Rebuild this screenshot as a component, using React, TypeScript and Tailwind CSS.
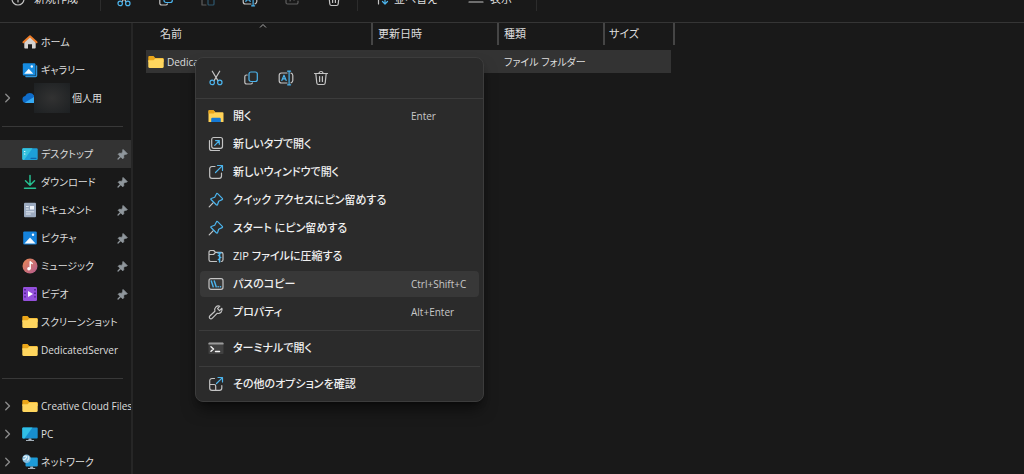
import type { ReactNode } from "react";

const GREY = "#c4c4c4";
const BLUE = "#4cb5ee";

function Svg({ children, className = "size-4" }: { children: ReactNode; className?: string }) {
  return (
    <svg
      viewBox="0 0 16 16"
      fill="none"
      stroke={GREY}
      strokeWidth="1.2"
      strokeLinecap="round"
      strokeLinejoin="round"
      className={`shrink-0 ${className}`}
      aria-hidden="true"
    >
      {children}
    </svg>
  );
}

/* ---- command icons ---- */

const CutIcon = () => (
  <Svg>
    <path d="M4.3 1.2 9.9 10.6M11.7 1.2 6.1 10.6" />
    <circle cx="4.2" cy="12.4" r="2.2" stroke={BLUE} />
    <circle cx="11.8" cy="12.4" r="2.2" stroke={BLUE} />
  </Svg>
);

const CopyIcon = () => (
  <Svg>
    <path d="M4.2 5H3.6A1.8 1.8 0 0 0 1.8 6.8v5.4A1.8 1.8 0 0 0 3.6 14h4.2a1.8 1.8 0 0 0 1.6-1" />
    <rect x="6" y="2" width="8.3" height="9.5" rx="2" stroke={BLUE} />
  </Svg>
);

const PasteIcon = () => (
  <Svg className="size-4 opacity-40">
    <path d="M6 3H2v11h4" />
    <rect x="8" y="4" width="6" height="10" rx="1" stroke={BLUE} />
  </Svg>
);

const RenameIcon = () => (
  <Svg>
    <path d="M9 3H3.5A2.3 2.3 0 0 0 1.2 5.3v5.4A2.3 2.3 0 0 0 3.5 13H9M13 3.2a2.3 2.3 0 0 1 1.8 2.2v5.2A2.3 2.3 0 0 1 13 12.8" />
    <path d="M3.8 10.5 6 5.2l2.2 5.3M4.6 8.9h2.8M9.6 1.2h3M9.6 14.8h3M11.1 1.2v13.6" stroke={BLUE} />
  </Svg>
);

const ShareIcon = () => (
  <Svg className="size-4 opacity-40">
    <path d="M6 3H3.5A1.5 1.5 0 0 0 2 4.5v7A1.5 1.5 0 0 0 3.5 13h9a1.5 1.5 0 0 0 1.5-1.5V10M10 2l4 3.5L10 9M14 5.5C9 5.5 7 7 6 10" />
  </Svg>
);

const TrashIcon = () => (
  <Svg>
    <path d="M1.5 3.5h13M6 3.5a2 2 0 0 1 4 0M2.8 3.5l1 9.5a1.7 1.7 0 0 0 1.7 1.5h5a1.7 1.7 0 0 0 1.7-1.5l1-9.5M6.6 6.5v5M9.4 6.5v5" />
  </Svg>
);

const NewIcon = () => (
  <Svg>
    <circle cx="8" cy="8" r="6" />
    <path d="M8 5v6M5 8h6" />
  </Svg>
);

const SortIcon = () => (
  <Svg>
    <path d="M4.5 13V3M2 5.5 4.5 3 7 5.5" />
    <path d="M11 3v10M8.5 10.5 11 13l2.5-2.5" stroke={BLUE} />
  </Svg>
);

const ViewIcon = () => (
  <Svg>
    <path d="M1 3h14M1 7h14M1 11h14" />
  </Svg>
);

/* ---- context menu icons ---- */

const OpenFolderIcon = () => (
  <Svg>
    <path d="M.5 2.5h5.2l1.5 1.8h7.3a1 1 0 0 1 1 1V14H.5z" fill="#ffd257" stroke="none" />
    <path d="M.5 3.2c0-.8.4-1.2 1.2-1.2h3.6l2 2-1.6 1.6H.5z" fill="#e8a41c" stroke="none" />
    <path d="M3.2 14V11a1.2 1.2 0 0 1 1.2-1.2h7.2a1.2 1.2 0 0 1 1.2 1.2v3z" fill="#1478d4" stroke="none" />
  </Svg>
);

const NewTabIcon = () => (
  <Svg>
    <rect x="3.7" y="1.5" width="10.8" height="10.8" rx="2" />
    <path d="M1.5 4.5v7.7a2.3 2.3 0 0 0 2.3 2.3h7.7" />
    <path d="M6.7 9.3 11 5M7.6 4.6H11.3v3.7" stroke={BLUE} />
  </Svg>
);

const NewWindowIcon = () => (
  <Svg>
    <path d="M7 2.5H4A2.3 2.3 0 0 0 1.7 4.8V12A2.3 2.3 0 0 0 4 14.3h7.2a2.3 2.3 0 0 0 2.3-2.3V9" />
    <path d="M7.5 8.5 14.2 1.8M9.5 1.5h5v5" stroke={BLUE} />
  </Svg>
);

const PinIcon = () => (
  <Svg>
    <path d="M5.3 10.7 1.2 14.8" />
    <path
      d="M9.6 1.7 14.3 6.4c.4.4.3 1-.2 1.2L10.7 9.3 9.5 12.8c-.2.5-.7.6-1 .2L3 7.5c-.4-.3-.2-.9.2-1L6.7 5.3 8.4 1.9c.2-.5.8-.6 1.2-.2z"
      stroke={BLUE}
    />
  </Svg>
);

const ZipIcon = () => (
  <Svg>
    <path d="M8.5 13.5H2.7A1.7 1.7 0 0 1 1 11.8V4.2a1.7 1.7 0 0 1 1.7-1.7h3L7.5 4.3h5.8A1.7 1.7 0 0 1 15 6v5.8a1.7 1.7 0 0 1-1.7 1.7M1 6.5h4.5l2-2.2" />
    <path d="M10 5h3M11.6 5v9M10.4 7.5h1M11.8 9.5h1M10.4 11.5h1" stroke={BLUE} strokeWidth="1.5" />
  </Svg>
);

const CopyPathIcon = () => (
  <Svg>
    <rect x="1" y="2.7" width="14" height="10.6" rx="2" />
    <path d="M3.3 5 5.2 10.8M6.3 5 8.2 10.8M10 10.8h.3M12.3 10.8h.3" stroke={BLUE} strokeWidth="1.4" />
  </Svg>
);

const WrenchIcon = () => (
  <Svg>
    <path d="M13.9 4.3 11.5 6.6 9.5 4.6 11.8 2.2A3.9 3.9 0 0 0 6.9 7.2L1.8 12a1.6 1.6 0 0 0 2.3 2.3L9.1 9.3A3.9 3.9 0 0 0 13.9 4.3z" />
  </Svg>
);

const TerminalIcon = () => (
  <Svg>
    <rect x=".5" y="2.5" width="15" height="11.5" rx=".8" fill="#414141" stroke="none" />
    <path d="M.5 4.5V3.3c0-.4.3-.8.8-.8h13.4c.5 0 .8.4.8.8v1.2z" fill="#9b9b9b" stroke="none" />
    <path d="M3 6.8 5.5 9 3 11.2M7.5 11.5h4" stroke="#f2f2f2" strokeWidth="1.5" />
  </Svg>
);

const MoreOptionsIcon = () => (
  <Svg>
    <path d="M6.5 2.5H4A2.3 2.3 0 0 0 1.7 4.8V12A2.3 2.3 0 0 0 4 14.3h7.5a2.3 2.3 0 0 0 2.3-2.3V9.5M1.7 8.5h4.5a1.5 1.5 0 0 1 1.5 1.5v4.3" />
    <path d="M8.5 7.5 14.2 1.8M10 1.5h4.5V6" stroke={BLUE} />
  </Svg>
);

/* ---- navigation icons ---- */

const HomeIcon = () => (
  <Svg>
    <path d="M2.3 7.5 8 2.3l5.7 5.2v6.2a.8.8 0 0 1-.8.8H10v-4.3H6v4.3H3.1a.8.8 0 0 1-.8-.8z" fill="#d5d2d0" stroke="none" />
    <path d="M1.4 8.3 8 2.2l6.6 6.1" stroke="#ef7d28" strokeWidth="1.9" />
  </Svg>
);

const GalleryIcon = () => (
  <Svg>
    <path d="M14.5 4v9.5a1 1 0 0 1-1 1H4" stroke="#2f94d8" strokeWidth="1.5" />
    <rect x=".8" y="1.2" width="12.6" height="12.2" rx="1" fill="#168be0" stroke="none" />
    <path d="m2.2 11.8 4.5-5 4.6 5z" fill="#f2faff" stroke="none" />
    <circle cx="9.8" cy="4.5" r="1.2" fill="#f2faff" stroke="none" />
  </Svg>
);

const CloudIcon = () => (
  <Svg>
    <path d="M4 13a3.6 3.6 0 0 1-.8-7.1A5 5 0 0 1 12 5.5 3.8 3.8 0 0 1 12.5 13z" fill="#0f6cc8" stroke="none" />
    <path d="M3 12.6 12 7a3.3 3.3 0 0 1 .5 6H4z" fill="#35a9f3" stroke="none" />
  </Svg>
);

const DesktopIcon = () => (
  <Svg>
    <rect x=".3" y="2.3" width="15.4" height="11.7" rx="1.2" fill="#1d9fd8" stroke="none" />
    <path d="M.3 3.5c0-.7.5-1.2 1.2-1.2h9L2 14h-.5C.8 14 .3 13.5.3 12.8z" fill="#35c3df" stroke="none" />
    <path d="M2.5 5.5h.4M2.5 8h.4" stroke="#e9fbff" />
    <path d="M9 12.3h5" stroke="#1065ac" />
  </Svg>
);

const DownloadIcon = () => (
  <Svg>
    <path d="M8 1.5v9M3.5 6.8 8 11.2l4.5-4.4M2.5 14.3h11" stroke="#25bf90" strokeWidth="1.5" />
  </Svg>
);

const DocumentIcon = () => (
  <Svg>
    <rect x="2" y=".8" width="12" height="14.5" rx="1" fill="#9cabc0" stroke="none" />
    <rect x="8" y="4" width="4" height="3.5" fill="#f3f6fb" stroke="none" />
    <path d="M4.3 4.5h2M4.3 7h2M4.3 9.8h7.5M4.3 12h4" stroke="#eaf0f7" strokeWidth=".9" />
  </Svg>
);

const PictureIcon = () => (
  <Svg>
    <rect x="1.2" y="1.5" width="13.6" height="13" rx="1.1" fill="#1583dc" stroke="none" />
    <path d="m2.5 13.5 5.5-6 5.5 6z" fill="#f5fbff" stroke="none" />
    <circle cx="11" cy="4.7" r="1.2" fill="#f5fbff" stroke="none" />
  </Svg>
);

const MusicIcon = () => (
  <Svg>
    <linearGradient id="music" x1="0" y1="0" x2="1" y2="1">
      <stop stopColor="#e88a55" />
      <stop offset="1" stopColor="#b35a90" />
    </linearGradient>
    <circle cx="8" cy="8" r="7.5" fill="url(#music)" stroke="none" />
    <circle cx="6.9" cy="10.7" r="1.7" fill="#fff" stroke="none" />
    <path d="M8.2 10.5V3.8l2 1.7" stroke="#fff" strokeWidth="1.4" />
  </Svg>
);

const VideoIcon = () => (
  <Svg>
    <rect x="1" y="1" width="14" height="14" rx="1.2" fill="#9450dc" stroke="none" />
    <path
      d="M3 3v10.5M13 3v10.5"
      stroke="#4d1f8f"
      strokeDasharray="1.4 2.2"
      strokeLinecap="butt"
      strokeWidth="1.6"
    />
    <path d="m6 5 5 3-5 3z" fill="#fff" stroke="none" />
  </Svg>
);

const FolderIcon = () => (
  <Svg>
    <path d="M.3 3.2C.3 2.5.8 2 1.5 2h4L7.3 3.9h7.2c.7 0 1.2.5 1.2 1.2V8H.3z" fill="#eba619" stroke="none" />
    <path
      d="M.3 6.3h5.2l1.8-1.7h7.2c.7 0 1.2.4 1.2 1.1v7.1c0 .7-.5 1.2-1.2 1.2h-13c-.7 0-1.2-.5-1.2-1.2z"
      fill="#ffd65e"
      stroke="none"
    />
  </Svg>
);

const PcIcon = () => (
  <Svg>
    <rect x=".3" y="1.5" width="15.4" height="11" rx=".9" fill="#188ece" stroke="none" />
    <path d="M.3 2.4c0-.5.4-.9.9-.9h9.3L2.5 12.5H1.2c-.5 0-.9-.4-.9-.9z" fill="#30bfe5" stroke="none" />
    <path d="M6.8 12.5h2.4l.5 1.6H12v1H4v-1h2.3z" fill="#a4afb9" stroke="none" />
  </Svg>
);

const NetworkIcon = () => (
  <Svg>
    <rect x="3.5" y="3.5" width="12.3" height="9" rx=".9" fill="#1c9bd9" stroke="none" />
    <path d="M8.5 12.5h2.4l.4 1.6h1.9v1H6v-1h2z" fill="#a4afb9" stroke="none" />
    <circle cx="4.5" cy="4.7" r="4.2" fill="#84bbdd" stroke="none" />
    <path d="M2 2.5c2-1 3.5.2 2.2 1.3S3 6 1.5 5.3M6.3 2.6c.9.9.5 2.6-.6 3.5" stroke="#e2f2fa" />
  </Svg>
);

const PinnedMark = () => (
  <Svg className="mr-[3px] size-[11px]">
    <path d="m1.5 14.5 4-4" stroke="#8f969c" strokeWidth="1.8" />
    <path
      d="m9.2 1 5.8 5.8-2 1-1.2-.2-2.2 2.2.2 3-1.5 1.5-6.6-6.6L3.2 6.2l3 .2 2.2-2.2L8.2 3z"
      fill="#8f969c"
      stroke="#8f969c"
    />
  </Svg>
);

const Chevron = () => (
  <Svg className="size-3">
    <path d="m5 3 5 5-5 5" stroke="#8a8a8a" strokeWidth="1.8" />
  </Svg>
);

type NavItem = {
  label: string;
  icon: ReactNode;
  pinned?: boolean;
  expandable?: boolean;
  active?: boolean;
  masked?: boolean;
};

const navGroups: NavItem[][] = [
  [
    { label: "ホーム", icon: <HomeIcon /> },
    { label: "ギャラリー", icon: <GalleryIcon /> },
    { label: "個人用", icon: <CloudIcon />, expandable: true, masked: true },
  ],
  [
    { label: "デスクトップ", icon: <DesktopIcon />, pinned: true, active: true },
    { label: "ダウンロード", icon: <DownloadIcon />, pinned: true },
    { label: "ドキュメント", icon: <DocumentIcon />, pinned: true },
    { label: "ピクチャ", icon: <PictureIcon />, pinned: true },
    { label: "ミュージック", icon: <MusicIcon />, pinned: true },
    { label: "ビデオ", icon: <VideoIcon />, pinned: true },
    { label: "スクリーンショット", icon: <FolderIcon /> },
    { label: "DedicatedServer", icon: <FolderIcon /> },
  ],
  [
    { label: "Creative Cloud Files", icon: <FolderIcon />, expandable: true },
    { label: "PC", icon: <PcIcon />, expandable: true },
    { label: "ネットワーク", icon: <NetworkIcon />, expandable: true },
  ],
];

type MenuItem = { label: string; icon: ReactNode; shortcut?: string; active?: boolean };

const menuGroups: MenuItem[][] = [
  [
    { label: "開く", icon: <OpenFolderIcon />, shortcut: "Enter" },
    { label: "新しいタブで開く", icon: <NewTabIcon /> },
    { label: "新しいウィンドウで開く", icon: <NewWindowIcon /> },
    { label: "クイック アクセスにピン留めする", icon: <PinIcon /> },
    { label: "スタート にピン留めする", icon: <PinIcon /> },
    { label: "ZIP ファイルに圧縮する", icon: <ZipIcon /> },
    { label: "パスのコピー", icon: <CopyPathIcon />, shortcut: "Ctrl+Shift+C", active: true },
    { label: "プロパティ", icon: <WrenchIcon />, shortcut: "Alt+Enter" },
  ],
  [{ label: "ターミナルで開く", icon: <TerminalIcon /> }],
  [{ label: "その他のオプションを確認", icon: <MoreOptionsIcon /> }],
];

const quickActions = [
  { label: "切り取り", icon: <CutIcon /> },
  { label: "コピー", icon: <CopyIcon /> },
  { label: "名前の変更", icon: <RenameIcon /> },
  { label: "削除", icon: <TrashIcon /> },
];

const toolbarActions = [
  quickActions[0],
  quickActions[1],
  { label: "貼り付け", icon: <PasteIcon /> },
  quickActions[2],
  { label: "共有", icon: <ShareIcon /> },
  quickActions[3],
];

function Toolbar() {
  return (
    <header className="-mt-6 flex h-[47px] shrink-0 items-center border-b border-[#353535] pl-[10px] text-[11px]">
      <button className="flex w-[90px] items-center gap-2">
        <NewIcon />
        新規作成
      </button>
      <div className="flex h-6 items-center gap-[26px] border-x border-[#2c2c2c] px-[15px]">
        {toolbarActions.map((action) => (
          <button key={action.label} aria-label={action.label}>
            {action.icon}
          </button>
        ))}
      </div>
      <button className="flex w-[94px] items-center gap-1 pl-4">
        <SortIcon />
        並べ替え
      </button>
      <button className="flex w-[84px] items-center gap-[6px] pl-4">
        <ViewIcon />
        表示
      </button>
      <button className="h-6 border-l border-[#2c2c2c] pl-4 text-[#303030]" aria-label="その他">
        •••
      </button>
    </header>
  );
}

function Sidebar() {
  return (
    <nav className="w-[133px] shrink-0 border-r-2 border-[#262626] pt-[5px]">
      {navGroups.map((group, i) => (
        <div key={i}>
          {i > 0 && (
            <div className="flex h-7 items-center pr-2 pl-[2px]">
              <hr className="w-full border-[#383838]" />
            </div>
          )}
          {group.map((item) => (
            <a
              key={item.label}
              href="#"
              className={`relative flex h-7 items-center whitespace-nowrap ${item.active ? "bg-[#333333]" : ""}`}
            >
              <span className="flex w-[22px] shrink-0 pl-[2px]">{item.expandable && <Chevron />}</span>
              {item.icon}
              {item.masked && (
                <span className="absolute left-[34px] h-[30px] w-9 bg-radial from-[#323232] to-[#1d2022]" />
              )}
              <span className={`min-w-0 flex-1 overflow-hidden ${item.masked ? "ml-[34px]" : "ml-[3px]"}`}>
                {item.label}
              </span>
              {item.pinned && <PinnedMark />}
            </a>
          ))}
        </div>
      ))}
    </nav>
  );
}

function FileTable() {
  return (
    <table className="w-[529px] table-fixed border-separate border-spacing-0 text-left">
      <thead className="text-[11px]">
        <tr className="h-[22px]">
          <th className="relative w-[227px] border-r-2 border-[#454545] p-0 pl-[14px] font-normal">
            名前
            <svg
              viewBox="0 0 8 5"
              fill="none"
              stroke="#a8a8a8"
              className="absolute top-0 left-1/2 h-[5px] w-2"
              aria-hidden="true"
            >
              <path d="M1 4.5 4 1.5l3 3" />
            </svg>
          </th>
          <th className="w-[126px] border-r-2 border-[#454545] p-0 pl-[5px] font-normal">更新日時</th>
          <th className="w-[106px] border-r-2 border-[#454545] p-0 pl-[5px] font-normal">種類</th>
          <th className="border-r-2 border-[#454545] p-0 pl-[4px] font-normal">サイズ</th>
        </tr>
      </thead>
      <tbody>
        <tr className="h-7 [&>td]:border-t-[5px] [&>td]:border-transparent [&>td]:bg-[#333333] [&>td]:bg-clip-padding [&>td]:p-0">
          <td>
            <div className="flex items-center gap-[3px] pl-[2px]">
              <FolderIcon />
              DedicatedServer
            </div>
          </td>
          <td />
          <td>
            <span className="pl-[5px]">ファイル フォルダー</span>
          </td>
          <td className="border-r-4" />
        </tr>
      </tbody>
    </table>
  );
}

function ContextMenu() {
  return (
    <div
      role="menu"
      className="absolute top-[57px] left-[195px] w-[289px] rounded-lg border border-[#3c3c3c] bg-[#2b2b2b] pb-[3px] text-[11px] font-medium text-[#f0f0f0] shadow-lg shadow-black/50"
    >
      <div className="flex h-[41px] items-center gap-[19px] border-b border-[#3c3c3c] pl-3">
        {quickActions.map((action) => (
          <button key={action.label} role="menuitem" aria-label={action.label}>
            {action.icon}
          </button>
        ))}
      </div>
      <div className="pt-[3px]">
        {menuGroups.map((group, i) => (
          <div key={i}>
            {i > 0 && <hr className="mx-[3px] mt-1 mb-[3px] border-[#3c3c3c]" />}
            {group.map((item) => (
              <div key={item.label} className="px-1 py-px">
                <button
                  role="menuitem"
                  className={`flex h-[26px] w-full items-center rounded px-2 ${item.active ? "bg-[#383838]" : ""}`}
                >
                  {item.icon}
                  <span className="flex-1 pl-[9px] text-left whitespace-nowrap">{item.label}</span>
                  {item.shortcut && (
                    <span className="w-[60px] text-left text-[10px] font-normal whitespace-nowrap text-[#c8c8c8]">
                      {item.shortcut}
                    </span>
                  )}
                </button>
              </div>
            ))}
          </div>
        ))}
      </div>
    </div>
  );
}

export default function App() {
  return (
    <div
      lang="ja"
      className="relative flex min-h-screen flex-col overflow-hidden bg-[#191919] font-['Open_Sans','Noto_Sans_CJK_JP',sans-serif] text-[10px] leading-4 text-[#dedede] [font-feature-settings:'palt']"
    >
      <Toolbar />
      <div className="flex flex-1">
        <Sidebar />
        <main className="min-w-0 flex-1 pl-[13px]">
          <FileTable />
        </main>
      </div>
      <ContextMenu />
    </div>
  );
}
